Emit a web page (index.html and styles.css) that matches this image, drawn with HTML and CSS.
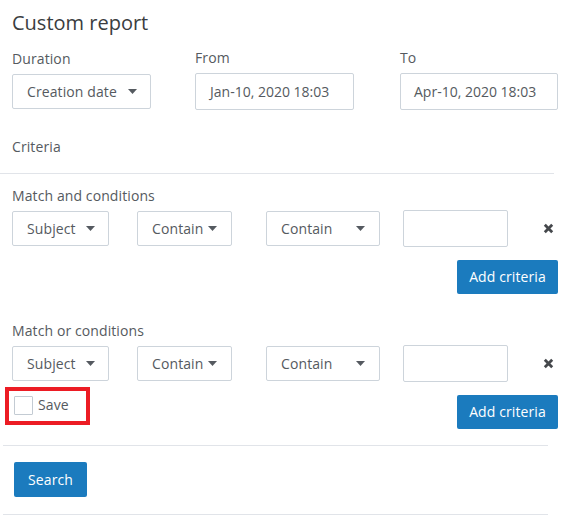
FILE: index.html
```html
<!DOCTYPE html>
<html>
<head>
<meta charset="utf-8">
<link rel="stylesheet" href="styles.css">
</head>
<body>
<div class="page">
  <h1 class="title">Custom report</h1>

  <div class="top-row">
    <div class="field field-duration">
      <div class="label">Duration</div>
      <div class="select select-duration"><span>Creation date</span><svg class="caret" width="9" height="5" viewBox="0 0 9 5"><polygon points="0,0 9,0 4.5,5"/></svg></div>
    </div>
    <div class="field field-from">
      <div class="label">From</div>
      <div class="input input-from">Jan-10, 2020 18:03</div>
    </div>
    <div class="field field-to">
      <div class="label">To</div>
      <div class="input input-to">Apr-10, 2020 18:03</div>
    </div>
  </div>

  <div class="section-label criteria">Criteria</div>
  <div class="rule rule-wide"></div>

  <div class="section-label cond-label">Match and conditions</div>
  <div class="cond-row">
    <div class="select sel-subject"><span>Subject</span><svg class="caret" width="9" height="5" viewBox="0 0 9 5"><polygon points="0,0 9,0 4.5,5"/></svg></div>
    <div class="select sel-contain"><span>Contain</span><svg class="caret" width="9" height="5" viewBox="0 0 9 5"><polygon points="0,0 9,0 4.5,5"/></svg></div>
    <div class="select sel-contain2"><span>Contain</span><svg class="caret" width="9" height="5" viewBox="0 0 9 5"><polygon points="0,0 9,0 4.5,5"/></svg></div>
    <div class="input text-input"></div>
    <svg class="remove" width="11" height="11" viewBox="0 0 11 11"><path d="M1.8 1.8 L9.2 9.2 M9.2 1.8 L1.8 9.2"/></svg>
  </div>
  <div class="btn-row">
    <button class="btn btn-add">Add criteria</button>
  </div>

  <div class="section-label cond-label cond-label-or">Match or conditions</div>
  <div class="cond-row">
    <div class="select sel-subject"><span>Subject</span><svg class="caret" width="9" height="5" viewBox="0 0 9 5"><polygon points="0,0 9,0 4.5,5"/></svg></div>
    <div class="select sel-contain"><span>Contain</span><svg class="caret" width="9" height="5" viewBox="0 0 9 5"><polygon points="0,0 9,0 4.5,5"/></svg></div>
    <div class="select sel-contain2"><span>Contain</span><svg class="caret" width="9" height="5" viewBox="0 0 9 5"><polygon points="0,0 9,0 4.5,5"/></svg></div>
    <div class="input text-input"></div>
    <svg class="remove" width="11" height="11" viewBox="0 0 11 11"><path d="M1.8 1.8 L9.2 9.2 M9.2 1.8 L1.8 9.2"/></svg>
  </div>
  <div class="save-row">
    <label class="save-box"><span class="checkbox"></span><span class="save-text">Save</span></label>
    <button class="btn btn-add btn-add2">Add criteria</button>
  </div>

  <div class="rule rule-narrow rule-1"></div>
  <button class="btn btn-search">Search</button>
  <div class="rule rule-narrow rule-2"></div>
</div>
</body>
</html>
```

FILE: styles.css
```css
* { box-sizing: border-box; }

html, body {
  margin: 0;
  padding: 0;
  background: #ffffff;
}

body {
  font-family: "Open Sans", "Liberation Sans", sans-serif;
  font-size: 14px;
  line-height: 20px;
  letter-spacing: 0.1px;
  color: #555a60;
}

.page {
  width: 565px;
  padding-top: 9px;
}

.title {
  margin: 0 0 0 12px;
  font-size: 20px;
  line-height: 28px;
  font-weight: 400;
  letter-spacing: 0;
  color: #3a3d40;
}

.top-row {
  display: flex;
  margin-top: 11px;
  padding-left: 12px;
}

.label {
  line-height: 20px;
  margin-bottom: 5px;
}

.field-duration {
  width: 183px;
  padding-top: 1px;
}

.field-from {
  width: 205px;
}

.select, .input {
  border: 1px solid #cdd4db;
  border-radius: 2px;
  background: #fff;
  color: #555a60;
}

.select {
  display: flex;
  align-items: center;
  justify-content: space-between;
  height: 35px;
  padding: 0 13px 0 14px;
}

.caret {
  display: block;
  fill: #555a60;
}

.select-duration { width: 139px; }

.input {
  height: 37px;
  line-height: 35px;
  padding-left: 14px;
  letter-spacing: 0;
}

.input-from { width: 159px; }
.input-to { width: 158px; padding-left: 13px; }

.section-label {
  margin-left: 12px;
}

.criteria {
  margin-top: 27px;
}

.rule {
  height: 1px;
  background: #e1e4e9;
}

.rule-wide {
  margin-top: 16px;
  width: 554px;
}

.cond-label {
  margin-top: 12px;
}

.cond-label-or {
  margin-top: 27px;
}

.cond-row {
  display: grid;
  grid-template-columns: 125px 129px 137px 140px auto;
  align-items: center;
  margin-top: 4px;
  padding-left: 12px;
}

.sel-subject { width: 97px; }
.sel-contain { width: 95px; padding-right: 14px; }
.sel-contain2 { width: 114px; padding-right: 14px; }

.text-input { width: 105px; }

.remove {
  display: block;
  stroke: #45484c;
  stroke-width: 2.8;
  fill: none;
}

.btn-row {
  display: flex;
  justify-content: flex-end;
  padding-right: 7px;
  margin-top: 13px;
}

.btn {
  border: none;
  border-radius: 2px;
  background: #1b7bbe;
  color: #ffffff;
  font-family: "Open Sans", "Liberation Sans", sans-serif;
  font-size: 14px;
  line-height: 20px;
  letter-spacing: 0.1px;
  height: 34px;
  padding: 0;
  cursor: pointer;
}

.btn-add { width: 101px; }

.save-row {
  display: flex;
  justify-content: space-between;
  align-items: flex-start;
  margin-top: 5px;
  padding-left: 5px;
  padding-right: 7px;
}

.save-box {
  display: flex;
  align-items: center;
  width: 85px;
  height: 38px;
  border: 4px solid #ec1c24;
  padding: 0 0 2px 5px;
}

.checkbox {
  display: block;
  width: 19px;
  height: 19px;
  border: 1px solid #c3cbd3;
  border-radius: 1px;
  background: #fff;
}

.save-text {
  margin-left: 5px;
}

.btn-add2 {
  margin-top: 8px;
}

.rule-narrow {
  width: 545px;
  margin-left: 3px;
}

.rule-1 {
  margin-top: 16px;
}

.btn-search {
  display: block;
  margin: 16px 0 0 14px;
  width: 73px;
  height: 35px;
}

.rule-2 {
  margin-top: 17px;
}
```
